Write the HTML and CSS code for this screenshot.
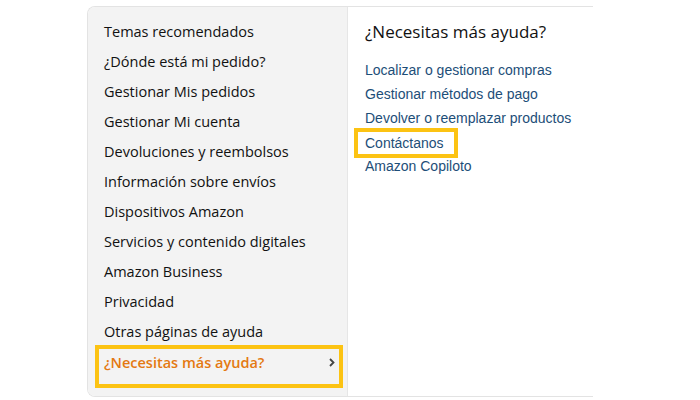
FILE: index.html
```html
<!DOCTYPE html>
<html lang="es">
<head>
  <meta charset="UTF-8" />
  <meta name="viewport" content="width=device-width, initial-scale=1" />
  <title>Ayuda</title>
  <link rel="stylesheet" href="styles.css">
</head>
<body>
  <div class="help-box">
    <ul class="topics">
      <li>Temas recomendados</li>
      <li>¿Dónde está mi pedido?</li>
      <li>Gestionar Mis pedidos</li>
      <li>Gestionar Mi cuenta</li>
      <li>Devoluciones y reembolsos</li>
      <li>Información sobre envíos</li>
      <li>Dispositivos Amazon</li>
      <li>Servicios y contenido digitales</li>
      <li>Amazon Business</li>
      <li>Privacidad</li>
      <li>Otras páginas de ayuda</li>
      <li class="more">
        <span>¿Necesitas más ayuda?</span>
        <svg class="chevron" width="6" height="9" viewBox="0 0 6 9">
          <path d="M1 1 L4.5 4.5 L1 8" fill="none" stroke="#444" stroke-width="1.8"/>
        </svg>
      </li>
    </ul>
    <div class="detail">
      <h2>¿Necesitas más ayuda?</h2>
      <ul class="links">
        <li><a href="#">Localizar o gestionar compras</a></li>
        <li><a href="#">Gestionar métodos de pago</a></li>
        <li><a href="#">Devolver o reemplazar productos</a></li>
        <li><a href="#" class="mark">Contáctanos</a></li>
        <li><a href="#">Amazon Copiloto</a></li>
      </ul>
    </div>
  </div>
</body>
</html>
```

FILE: styles.css
```css
body {
  margin: 0;
  background: #fff;
  color: #111;
  font-family: 'Open Sans', sans-serif;
}

.help-box {
  display: flex;
  margin: 6px 0 0 87px;
  width: 505px;
  height: 389px;
  border: 1px solid #e3e3e3;
  border-right: none;
  border-radius: 8px 0 0 8px;
  overflow: hidden;
}

.topics {
  list-style: none;
  margin: 0;
  padding: 10px 0 0;
  width: 260px;
  background: #f3f3f3;
  border-right: 1px solid #e6e6e6;
  box-sizing: border-box;
}

.topics li {
  height: 30px;
  line-height: 30px;
  padding-left: 16px;
  font-size: 14.5px;
  color: #111;
}

.topics .more {
  display: flex;
  justify-content: space-between;
  align-items: center;
  box-sizing: border-box;
  margin: -2px 4px 0 7px;
  padding: 0 4px 8px 5px;
  height: 43px;
  border: 4px solid #fcc313;
  font-weight: 600;
  color: #e47911;
}

.detail {
  padding: 13px 0 0 17px;
}

.detail h2 {
  margin: 0 0 14px;
  font-size: 17px;
  font-weight: 400;
  color: #111;
}

.links {
  list-style: none;
  margin: 0;
  padding: 0;
}

.links li {
  height: 24px;
  line-height: 24px;
}

.links a {
  font-family: 'Liberation Sans', Arial, sans-serif;
  font-size: 14px;
  color: #1d4e78;
  text-decoration: none;
}

.links a.mark {
  display: inline-block;
  position: relative;
  top: -1px;
  left: -11px;
  margin-right: -11px;
  padding: 0 10px 0 7px;
  line-height: 22px;
  border: 4px solid #fcc313;
}
```
